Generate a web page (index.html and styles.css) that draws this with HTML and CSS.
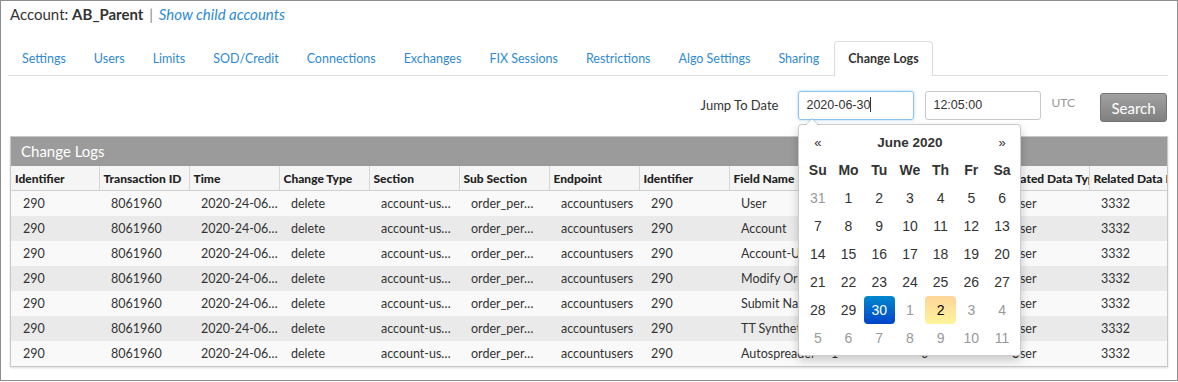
FILE: index.html
```html
<!DOCTYPE html>
<html lang="en">
<head>
    <meta charset="UTF-8">
    <meta name="viewport" content="width=device-width, initial-scale=1.0">
    <title>Change Logs</title>
    <link rel="stylesheet" href="styles.css">
</head>
<body>
    <div class="frame">
        <div class="account-bar">
            Account: <b>AB_Parent</b> <span class="sep">|</span> <a href="#" class="link">Show child accounts</a>
        </div>

        <ul class="tabs">
            <li><a href="#">Settings</a></li>
            <li><a href="#">Users</a></li>
            <li><a href="#">Limits</a></li>
            <li><a href="#">SOD/Credit</a></li>
            <li><a href="#">Connections</a></li>
            <li><a href="#">Exchanges</a></li>
            <li><a href="#">FIX Sessions</a></li>
            <li><a href="#">Restrictions</a></li>
            <li><a href="#">Algo Settings</a></li>
            <li><a href="#">Sharing</a></li>
            <li class="active"><a href="#">Change Logs</a></li>
        </ul>

        <div class="toolbar">
            <span class="label">Jump To Date</span>
            <div class="date-field">
                <div class="input focused">2020-06-30<span class="caret"></span></div>
                <div class="datepicker">
                    <table class="cal">
                        <thead>
                            <tr class="month-row">
                                <th class="nav">&laquo;</th>
                                <th colspan="5" class="month">June 2020</th>
                                <th class="nav">&raquo;</th>
                            </tr>
                            <tr class="dow">
                                <th>Su</th><th>Mo</th><th>Tu</th><th>We</th><th>Th</th><th>Fr</th><th>Sa</th>
                            </tr>
                        </thead>
                        <tbody>
                            <tr><td class="old">31</td><td>1</td><td>2</td><td>3</td><td>4</td><td>5</td><td>6</td></tr>
                            <tr><td>7</td><td>8</td><td>9</td><td>10</td><td>11</td><td>12</td><td>13</td></tr>
                            <tr><td>14</td><td>15</td><td>16</td><td>17</td><td>18</td><td>19</td><td>20</td></tr>
                            <tr><td>21</td><td>22</td><td>23</td><td>24</td><td>25</td><td>26</td><td>27</td></tr>
                            <tr><td>28</td><td>29</td><td class="active">30</td><td class="new">1</td><td class="today">2</td><td class="new">3</td><td class="new">4</td></tr>
                            <tr><td class="new">5</td><td class="new">6</td><td class="new">7</td><td class="new">8</td><td class="new">9</td><td class="new">10</td><td class="new">11</td></tr>
                        </tbody>
                    </table>
                </div>
            </div>
            <div class="input">12:05:00</div>
            <span class="tz">UTC</span>
            <button class="search">Search</button>
        </div>

        <div class="panel">
            <div class="panel-title">Change Logs</div>
            <table class="logs">
                <colgroup>
                    <col class="first">
                    <col><col><col><col><col><col><col><col><col><col><col><col>
                </colgroup>
                <thead>
                    <tr>
                        <th>Identifier</th>
                        <th>Transaction ID</th>
                        <th>Time</th>
                        <th>Change Type</th>
                        <th>Section</th>
                        <th>Sub Section</th>
                        <th>Endpoint</th>
                        <th>Identifier</th>
                        <th>Field Name</th>
                        <th>Old Value</th>
                        <th>New Value</th>
                        <th>Related Data Type</th>
                        <th>Related Data ID</th>
                    </tr>
                </thead>
                <tbody id="logRows"></tbody>
            </table>
        </div>
    </div>

    <script>
    document.addEventListener('DOMContentLoaded', function () {
        const fields = ['User', 'Account', 'Account-Users', 'Modify Orders', 'Submit Native', 'TT Synthetic', 'Autospreader'];
        const body = document.getElementById('logRows');

        fields.forEach(field => {
            const row = document.createElement('tr');
            const values = ['290', '8061960', '2020-24-06\u2026', 'delete', 'account-us\u2026', 'order_per\u2026',
                'accountusers', '290', field, '1', '0', 'User', '3332'];
            values.forEach(value => {
                const cell = document.createElement('td');
                cell.textContent = value;
                row.appendChild(cell);
            });
            body.appendChild(row);
        });
    });
    </script>
</body>
</html>
```

FILE: styles.css
```css
body {
    margin: 0;
    font-family: Lato, "Open Sans", sans-serif;
    color: #333;
    background-color: #fff;
}

.frame {
    height: 381px;
    box-sizing: border-box;
    border: 1px solid #8d8d8d;
    padding: 0 9px;
    overflow: hidden;
}

.account-bar {
    font-size: 15px;
    line-height: 20px;
    padding-top: 3px;
}

.account-bar .sep {
    color: #888;
    margin: 0 2px;
}

.link {
    color: #2f8ad3;
    font-style: italic;
    text-decoration: none;
}

.tabs {
    display: flex;
    list-style: none;
    margin: 17px 0 0 -2px;
    padding: 0;
    border-bottom: 1px solid #ddd;
}

.tabs a {
    display: block;
    padding: 0 13px 1px;
    line-height: 33px;
    font-size: 12.5px;
    color: #2f8ad3;
    text-decoration: none;
    border: 1px solid transparent;
    border-bottom: none;
    border-radius: 4px 4px 0 0;
    margin-bottom: -1px;
}

.tabs .active a {
    border-color: #ddd;
    background-color: #fff;
    color: #333;
    font-weight: bold;
    padding: 0 13px 1px;
    margin-left: 1px;
}

.toolbar {
    display: flex;
    justify-content: flex-end;
    align-items: flex-start;
    margin-top: 15px;
    height: 31px;
    padding-right: 1px;
}

.label {
    font-size: 13px;
    line-height: 29px;
    margin-right: 20px;
}

.date-field {
    position: relative;
    margin-right: 11px;
}

.input {
    width: 116px;
    height: 29px;
    box-sizing: border-box;
    border: 1px solid #c9c9c9;
    border-radius: 3px;
    padding: 0 7px;
    font-family: "Liberation Sans", Arial, sans-serif;
    font-size: 12.5px;
    line-height: 27px;
    color: #333;
}

.input.focused {
    border-color: #8ec3ee;
    box-shadow: 0 0 3px rgba(102, 175, 233, 0.6);
}

.caret {
    display: inline-block;
    width: 1px;
    height: 15px;
    background-color: #333;
    vertical-align: -3px;
}

.tz {
    font-size: 12px;
    color: #999;
    margin: 4px 25px 0 10px;
    line-height: 16px;
}

.search {
    margin-top: 2px;
    width: 67px;
    height: 29px;
    border: 1px solid #747474;
    border-radius: 3px;
    background: linear-gradient(#a1a1a1, #808080);
    color: #fff;
    font-family: Lato, sans-serif;
    font-size: 15px;
    cursor: pointer;
}

.datepicker {
    position: absolute;
    top: 33px;
    left: 0;
    z-index: 10;
    width: 223px;
    box-sizing: border-box;
    padding: 3px;
    background-color: #fff;
    border: 1px solid rgba(0, 0, 0, 0.2);
    border-radius: 4px;
    box-shadow: 0 4px 10px rgba(0, 0, 0, 0.2);
    font-family: "Liberation Sans", Arial, sans-serif;
}

.datepicker:before {
    content: "";
    position: absolute;
    top: -7px;
    left: 6px;
    border-left: 7px solid transparent;
    border-right: 7px solid transparent;
    border-bottom: 7px solid rgba(0, 0, 0, 0.2);
}

.datepicker:after {
    content: "";
    position: absolute;
    top: -6px;
    left: 7px;
    border-left: 6px solid transparent;
    border-right: 6px solid transparent;
    border-bottom: 6px solid #fff;
}

.cal {
    width: 100%;
    border-collapse: collapse;
    table-layout: fixed;
}

.cal th,
.cal td {
    height: 28px;
    padding: 0;
    text-align: center;
    font-size: 14px;
    color: #333;
}

.cal .month {
    font-size: 13.5px;
    font-weight: bold;
}

.cal .nav {
    font-size: 13px;
    font-weight: normal;
}

.cal .dow th {
    font-size: 14px;
    font-weight: bold;
}

.cal .old,
.cal .new {
    color: #999;
}

.cal .active {
    background: linear-gradient(#0088cc, #0044cc);
    color: #fff;
    border-radius: 4px;
}

.cal .today {
    background: linear-gradient(#fdd49a, #fdf59a);
    color: #000;
    border-radius: 4px;
}

.panel {
    margin-top: 14px;
    border: 1px solid #c8c8c8;
    box-shadow: 0 1px 2px rgba(0, 0, 0, 0.15);
    overflow: hidden;
}

.panel-title {
    height: 29px;
    line-height: 29px;
    background-color: #9b9b9b;
    color: #fff;
    font-size: 15px;
    padding-left: 10px;
}

.logs {
    width: 1168px;
    border-collapse: collapse;
    table-layout: fixed;
}

.logs col {
    width: 90px;
}

.logs col.first {
    width: 88px;
}

.logs th {
    height: 24px;
    padding: 0 4px;
    background-color: #f5f5f5;
    border-right: 1px solid #d6d6d6;
    border-bottom: 1px solid #cfcfcf;
    font-size: 12px;
    font-weight: 900;
    color: #222;
    text-align: left;
    white-space: nowrap;
    overflow: hidden;
}

.logs td {
    height: 25px;
    padding: 0 0 0 12px;
    font-size: 12.5px;
    color: #333;
    white-space: nowrap;
    overflow: hidden;
    text-overflow: ellipsis;
}

.logs tbody tr:nth-child(odd) td {
    background-color: #f9f9f9;
}

.logs tbody tr:nth-child(even) td {
    background-color: #eaeaea;
}
```
